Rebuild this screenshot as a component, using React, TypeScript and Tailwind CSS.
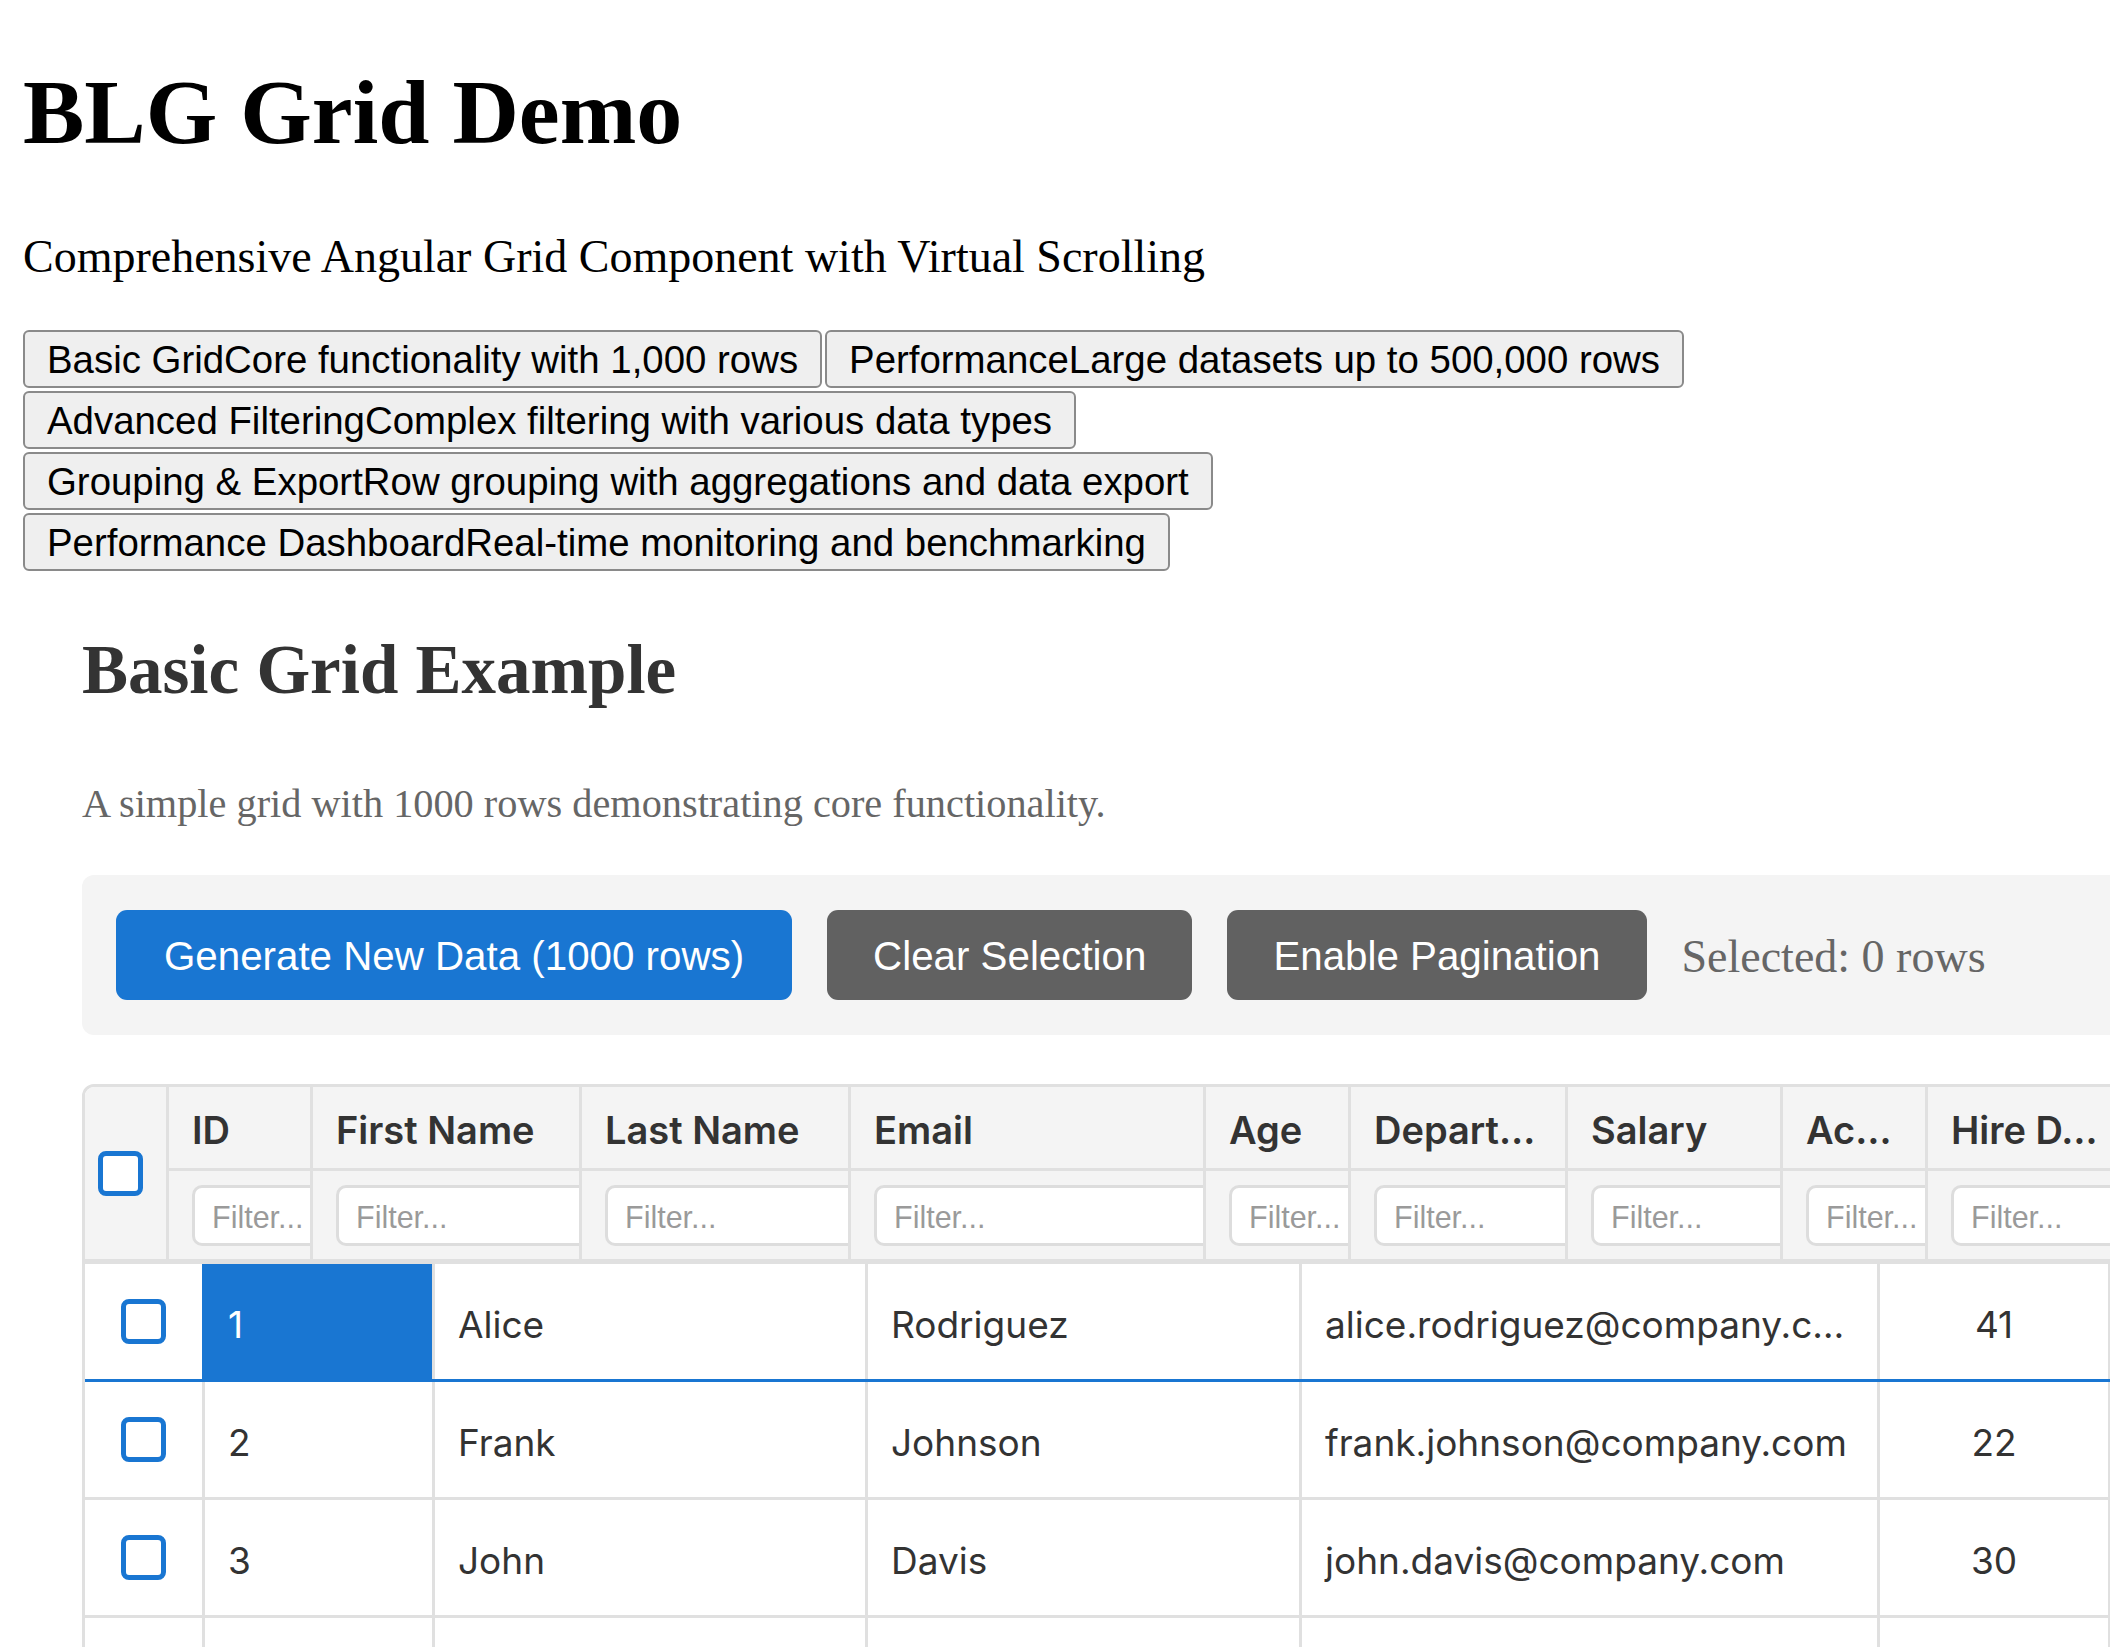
import React from 'react'

const demos = [
  'Basic GridCore functionality with 1,000 rows',
  'PerformanceLarge datasets up to 500,000 rows',
  'Advanced FilteringComplex filtering with various data types',
  'Grouping & ExportRow grouping with aggregations and data export',
  'Performance DashboardReal-time monitoring and benchmarking',
]

const headerCols = [
  { label: 'ID', w: 'w-[144px]' },
  { label: 'First Name', w: 'w-[269px]' },
  { label: 'Last Name', w: 'w-[269px]' },
  { label: 'Email', w: 'w-[355px]' },
  { label: 'Age', w: 'w-[145px]' },
  { label: 'Depart…', w: 'w-[217px]' },
  { label: 'Salary', w: 'w-[215px]' },
  { label: 'Ac…', w: 'w-[145px]' },
  { label: 'Hire D…', w: 'w-[230px]' },
]

// row 4 sits below the fold, only its top edge shows
const rows = [
  { id: '1', first: 'Alice', last: 'Rodriguez', email: 'alice.rodriguez@company.c…', age: '41' },
  { id: '2', first: 'Frank', last: 'Johnson', email: 'frank.johnson@company.com', age: '22' },
  { id: '3', first: 'John', last: 'Davis', email: 'john.davis@company.com', age: '30' },
  { id: '', first: '', last: '', email: '', age: '' },
]

function Checkbox() {
  return <span className="block h-[45px] w-[45px] rounded-[8px] border-[5px] border-[#1976d2] bg-white" />
}

function GridHeader() {
  return (
    <div className="flex border-b-[5px] border-[#e0e0e0] bg-[#f4f4f4]">
      <div className="flex w-[81px] shrink-0 items-center pl-[13px]">
        <Checkbox />
      </div>
      {headerCols.map((col) => (
        <div key={col.label} className={`${col.w} shrink-0 border-l-[3px] border-[#e0e0e0]`}>
          <div className="flex h-[84px] items-center overflow-hidden whitespace-nowrap border-b-[3px] border-[#e0e0e0] pl-[23px] pt-[5px] text-[38px] font-semibold text-[#333]">
            {col.label}
          </div>
          <div className="flex h-[88px] items-center overflow-hidden pl-[23px]">
            <input
              placeholder="Filter..."
              className="h-[61px] w-[420px] shrink-0 rounded-[10px] border-[3px] border-[#dddddd] bg-white pl-[17px] pt-[4px] font-['Liberation_Sans',Arial,sans-serif] text-[30.5px] outline-none placeholder:text-[#9a9a9a]"
            />
          </div>
        </div>
      ))}
    </div>
  )
}

function GridRow({ row, active }: { row: (typeof rows)[number]; active: boolean }) {
  const cell = 'flex shrink-0 items-center overflow-hidden whitespace-nowrap border-l-[3px] border-[#e0e0e0] pl-[23px] pt-[6px]'
  return (
    <div
      className={`flex h-[118px] border-b-[3px] text-[37px] text-[#333] ${
        active ? 'border-b-[#1976d2]' : 'border-b-[#e0e0e0]'
      }`}
    >
      <div className="flex w-[117px] shrink-0 items-center justify-center">
        <Checkbox />
      </div>
      <div
        className={`flex w-[230px] shrink-0 items-center border-l-[3px] pl-[23px] pt-[6px] ${
          active ? 'border-[#1976d2] bg-[#1976d2] text-white' : 'border-[#e0e0e0]'
        }`}
      >
        {row.id}
      </div>
      <div className={`${cell} w-[433px]`}>{row.first}</div>
      <div className={`${cell} w-[434px]`}>{row.last}</div>
      <div className={`${cell} w-[578px]`}>{row.email}</div>
      <div className="flex w-[231px] shrink-0 items-center justify-center border-l-[3px] border-[#e0e0e0] pt-[6px]">
        {row.age}
      </div>
      <div className={`${cell} w-[300px]`} />
    </div>
  )
}

export default function App() {
  return (
    <div className="h-screen w-full overflow-hidden bg-white px-[23px] font-['Liberation_Serif','Times_New_Roman',serif] text-black">
      <h1 className="pt-[61px] text-[92px] font-bold leading-[102px]">BLG Grid Demo</h1>
      <p className="mt-[68px] text-[46px] leading-[51px]">
        Comprehensive Angular Grid Component with Virtual Scrolling
      </p>

      <div className="mt-[48px] flex flex-wrap gap-[3px] font-['Liberation_Sans',Arial,sans-serif]">
        {demos.map((d) => (
          <button
            key={d}
            className="h-[58px] whitespace-nowrap rounded-[6px] border-2 border-[#8a8a8a] bg-[#efefef] px-[22px] pt-[2px] text-[38.4px] leading-none text-black"
          >
            {d}
          </button>
        ))}
      </div>

      <section className="mt-[61px] w-[2300px] pl-[59px]">
        <h2 className="text-[69px] font-bold leading-[76px] text-[#333]">Basic Grid Example</h2>
        <p className="mt-[73px] text-[40.3px] leading-[45px] text-[#666]">
          A simple grid with 1000 rows demonstrating core functionality.
        </p>

        <div className="mt-[49px] flex items-center gap-[35px] rounded-[12px] bg-[#f4f4f4] px-[34px] py-[35px]">
          <button className="h-[90px] rounded-[11px] bg-[#1976d2] px-[48px] pt-[5px] font-['Liberation_Sans',Arial,sans-serif] text-[40.3px] text-white">
            Generate New Data (1000 rows)
          </button>
          <button className="h-[90px] rounded-[11px] bg-[#616161] px-[46px] pt-[5px] font-['Liberation_Sans',Arial,sans-serif] text-[40.3px] text-white">
            Clear Selection
          </button>
          <button className="h-[90px] rounded-[11px] bg-[#616161] px-[46px] pt-[5px] font-['Liberation_Sans',Arial,sans-serif] text-[40.3px] text-white">
            Enable Pagination
          </button>
          <span className="pt-[3px] text-[46px] text-[#666]">Selected: 0 rows</span>
        </div>

        <div className="mt-[49px] overflow-hidden rounded-tl-[12px] border-[3px] border-[#e0e0e0] font-['Inter',sans-serif]">
          <GridHeader />
          {rows.map((r, i) => (
            <GridRow key={i} row={r} active={i === 0} />
          ))}
        </div>
      </section>
    </div>
  )
}
